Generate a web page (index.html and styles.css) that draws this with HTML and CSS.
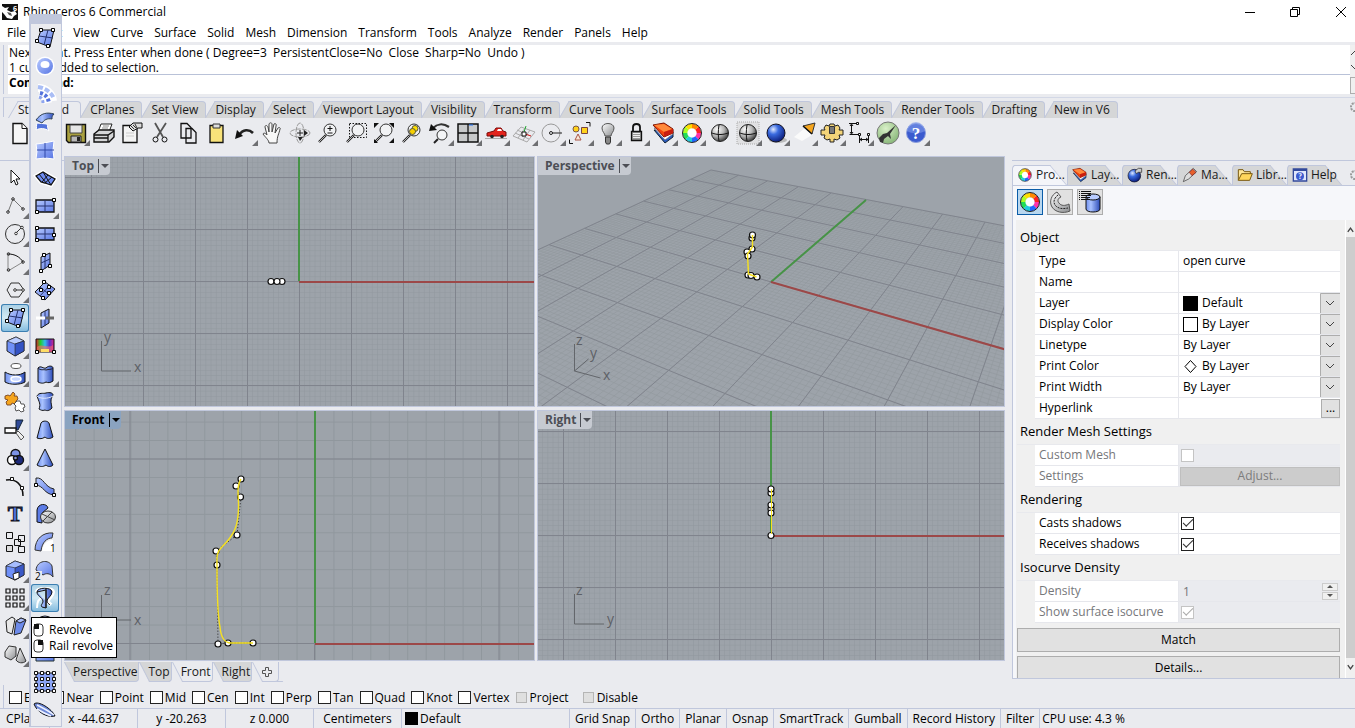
FILE: index.html
```html
<!DOCTYPE html>
<html lang="en">
<head>
<meta charset="utf-8">
<title>Rhinoceros 6 Commercial</title>
<link rel="stylesheet" href="styles.css">
</head>
<body>
<svg class="defs" aria-hidden="true">
  <defs>
    <linearGradient id="blue" x1="0" y1="0" x2="1" y2="1"><stop offset="0" stop-color="#b9cbff"/><stop offset="1" stop-color="#5876e4"/></linearGradient>
    <linearGradient id="tube" x1="0" y1="0" x2="1" y2="0"><stop offset="0" stop-color="#6f8fee"/><stop offset=".35" stop-color="#a9c2ff"/><stop offset="1" stop-color="#2b4bb8"/></linearGradient>
    <linearGradient id="grey" x1="0" y1="0" x2="1" y2="1"><stop offset="0" stop-color="#fff"/><stop offset="1" stop-color="#8b8d90"/></linearGradient>
    <radialGradient id="ballgrey" cx=".35" cy=".3" r=".8"><stop offset="0" stop-color="#fff"/><stop offset=".5" stop-color="#b4b4b4"/><stop offset="1" stop-color="#222"/></radialGradient>
    <radialGradient id="ballblue" cx=".35" cy=".3" r=".8"><stop offset="0" stop-color="#dfe9ff"/><stop offset=".35" stop-color="#3a6be0"/><stop offset="1" stop-color="#04106a"/></radialGradient>
    <radialGradient id="ballgreen" cx=".4" cy=".3" r=".8"><stop offset="0" stop-color="#d9f0c8"/><stop offset="1" stop-color="#7fb070"/></radialGradient>
    <linearGradient id="spectrum" x1="0" y1="0" x2="1" y2="0"><stop offset="0" stop-color="#d22"/><stop offset=".25" stop-color="#2c3"/><stop offset=".5" stop-color="#3be"/><stop offset=".75" stop-color="#53c"/><stop offset="1" stop-color="#d28"/></linearGradient>
    <pattern id="topMinor" width="5.2" height="5.2" patternUnits="userSpaceOnUse" x="234" y="124.5"><path d="M0 0H5.2M0 0V5.2" class="minor"/></pattern>
    <pattern id="topMajor" width="52" height="52" patternUnits="userSpaceOnUse" x="234" y="124"><path d="M0 .5H52M.5 0V52" class="major"/></pattern>
    <pattern id="frontMinor" width="18.45" height="18.45" patternUnits="userSpaceOnUse" x="250" y="232"><path d="M0 .5H19M.5 0V19" class="minor"/></pattern>
    <pattern id="frontMajor" width="184.5" height="184.5" patternUnits="userSpaceOnUse" x="249" y="232"><path d="M0 .5H185M.5 0V185" class="major"/></pattern>
    <pattern id="rightMinor" width="5.2" height="5.2" patternUnits="userSpaceOnUse" x="233" y="124.5"><path d="M0 0H5.2M0 0V5.2" class="minor"/></pattern>
    <pattern id="rightMajor" width="52" height="52" patternUnits="userSpaceOnUse" x="233" y="124"><path d="M0 .5H52M.5 0V52" class="major"/></pattern>
    <symbol id="wheel" viewBox="0 0 24 24"><circle cx="12" cy="12" r="4.500" fill="#fff"/><g fill="none" stroke-width="4.500"><circle cx="12" cy="12" r="7" pathLength="8" stroke="#f22" stroke-dasharray="1 7" stroke-dashoffset="1"/><circle cx="12" cy="12" r="7" pathLength="8" stroke="#f3a" stroke-dasharray="1 7"/><circle cx="12" cy="12" r="7" pathLength="8" stroke="#26f" stroke-dasharray="1 7" stroke-dashoffset="-1"/><circle cx="12" cy="12" r="7" pathLength="8" stroke="#2cd" stroke-dasharray="1 7" stroke-dashoffset="-2"/><circle cx="12" cy="12" r="7" pathLength="8" stroke="#2d5" stroke-dasharray="1 7" stroke-dashoffset="-3"/><circle cx="12" cy="12" r="7" pathLength="8" stroke="#af2" stroke-dasharray="1 7" stroke-dashoffset="-4"/><circle cx="12" cy="12" r="7" pathLength="8" stroke="#fd0" stroke-dasharray="1 7" stroke-dashoffset="-5"/><circle cx="12" cy="12" r="7" pathLength="8" stroke="#f80" stroke-dasharray="1 7" stroke-dashoffset="-6"/></g><circle cx="12" cy="12" r="9.500" fill="none" stroke="#222"/></symbol>
    <symbol id="layers" viewBox="0 0 24 24"><path d="M2 9l11 13 8-6V11z" fill="#2a5cc0" stroke="#123"/><path d="M2 7l11 12 8-6V9z" fill="#fff" stroke="#667" stroke-width=".7"/><path d="M1 4l11-2 9 6v4l-9 4z" fill="#f4430c" stroke="#7a1200"/><path d="M2 4l10-1 8 5-8 3z" fill="#ff8a3c"/><path d="M12 11l9-3v4l-9 4z" fill="#c81e10"/></symbol>
    <symbol id="lens" viewBox="0 0 24 24"><path d="M10 14L3 21" stroke="#222" stroke-width="2.400"/><path d="M9.500 14.500L3 21" stroke="#ddd" stroke-width=".8"/><circle cx="14" cy="9" r="6" fill="#f4f5f7" fill-opacity=".7" stroke="#333"/></symbol>
    <symbol id="patch" viewBox="0 0 24 24"><path d="M8 4h13l-4 17L4 16z" fill="url(#blue)" stroke="#111"/><path d="M15 4l-4 15M6 10l14 2" stroke="#26336f"/><g fill="#fff" stroke="#000"><path d="M6.500 2.500h3v3h-3zM18.500 2.500h3v3h-3zM2.500 13.500h3v3h-3zM13.500 18.500h3v3h-3z"/></g></symbol>
  </defs>
</svg>

<header class="titlebar">
  <svg class="appicon" viewBox="0 0 16 16"><path d="M0 0h16v16H0z" fill="#111"/><path d="M0 2l3 2 4-1-2 3 4 2 4-1 2 3-3 2-2 3-5-1-3-4-2-2z" fill="#fff"/><path d="M5 8l4 1 1 3-3-1z" fill="#555"/><text x="11" y="7" class="appnum">6</text></svg>
  <h1>Rhinoceros 6 Commercial</h1>
  <div class="winbtns">
    <button aria-label="Minimize"><svg viewBox="0 0 12 12"><path d="M1 6.500h10"/></svg></button>
    <button aria-label="Restore"><svg viewBox="0 0 12 12"><path d="M1.500 3.500h7v7h-7zM3.500 3V1.500h7v7H9"/></svg></button>
    <button aria-label="Close"><svg viewBox="0 0 12 12"><path d="M1 1l10 10M11 1L1 11"/></svg></button>
  </div>
</header>

<nav class="menubar">
  <button>File</button><button>Edit</button><button>View</button><button>Curve</button><button>Surface</button><button>Solid</button><button>Mesh</button><button>Dimension</button><button>Transform</button><button>Tools</button><button>Analyze</button><button>Render</button><button>Panels</button><button>Help</button>
</nav>

<section class="command">
  <div class="lines">
    <div class="history"><p>Next point. Press Enter when done ( Degree=3&nbsp; PersistentClose=No&nbsp; Close&nbsp; Sharp=No&nbsp; Undo )</p><p>1 curve added to selection.</p></div>
    <div class="prompt"><label for="cmd">Command:</label><input id="cmd" type="text"></div>
  </div>
  <div class="cmdscroll"><svg viewBox="0 0 6 8"><path d="M1 6l4-4"/></svg><svg viewBox="0 0 6 8"><path d="M1 2l4 4"/></svg><i></i></div>
</section>

<div class="tooltabs" role="tablist">
  <button class="current">Standard</button><button>CPlanes</button><button>Set View</button><button>Display</button><button>Select</button><button>Viewport Layout</button><button>Visibility</button><button>Transform</button><button>Curve Tools</button><button>Surface Tools</button><button>Solid Tools</button><button>Mesh Tools</button><button>Render Tools</button><button>Drafting</button><button>New in V6</button>
  <svg class="cog" viewBox="0 0 6 12"><circle cx="6" cy="6" r="4" stroke-dasharray="2 1"/></svg>
</div>

<div class="toolbar">
  <button aria-label="New"><svg viewBox="0 0 24 24"><path d="M5 2.500h9l5 5v15H5z" fill="#f6f6f6" stroke="#111" stroke-width="1.400"/><path d="M14 2.500v5h5" fill="#fff" stroke="#111"/></svg></button>
  <button aria-label="Open"><svg viewBox="0 0 24 24"><path d="M2 6h7l2 2h9v12H2z" fill="#e7c24a" stroke="#111"/></svg></button>
  <button class="more" aria-label="Save"><svg viewBox="0 0 24 24"><path d="M2.500 3.500h19v18h-17l-2-2z" fill="#a9a03f" stroke="#111" stroke-width="1.400"/><path d="M6 4h12v8H6z" fill="#e6e6e6" stroke="#444"/><path d="M7 15h10v6H7z" fill="#b9b9b9" stroke="#222"/><path d="M13 16h3v4h-3z" fill="#222"/></svg></button>
  <button aria-label="Print"><svg viewBox="0 0 24 24"><path d="M9 3h11l-3 8H6z" fill="#fff" stroke="#222"/><path d="M2 13l5-4h15v7l-5 5H2z" fill="#d4d5d7" stroke="#111" stroke-width="1.400"/><path d="M2 14h14l6-4M2 17h14M16 14v7" fill="none" stroke="#111" stroke-width="1.300"/><path d="M11 5h6M10 7h6" stroke="#888"/></svg></button>
  <button aria-label="Document properties"><svg viewBox="0 0 24 24"><path d="M3 4.500h14v17H3z" fill="#f4f4f4" stroke="#111" stroke-width="1.300"/><path d="M6 12h8M6 15h8" stroke="#ccc"/><path d="M9 6l4-4h9v5h-4l-5 3z" fill="#ddd" stroke="#111"/><path d="M11 5l3 3M13 4l3 3M15 3l2 4" stroke="#333"/></svg></button>
  <button aria-label="Cut"><svg viewBox="0 0 24 24" fill="none"><path d="M7 2l8 14M18 2L9 16" stroke="#555" stroke-width="1.800"/><circle cx="7.500" cy="18.500" r="2.500" stroke="#111"/><circle cx="16.500" cy="18.500" r="2.500" stroke="#111"/></svg></button>
  <button aria-label="Copy"><svg viewBox="0 0 24 24" fill="#f7f7f7" stroke="#111" stroke-width="1.300"><path d="M5 2.500h6l4 4V17H5z"/><path d="M10 7.500h6l4 4V22H10z"/></svg></button>
  <button aria-label="Paste"><svg viewBox="0 0 24 24"><path d="M6 4.500h13v17H6z" fill="#f9e37a" stroke="#111" stroke-width="1.300"/><path d="M9 3h7v4H9z" fill="#ddd" stroke="#333"/></svg></button>
  <button class="more" aria-label="Undo"><svg viewBox="0 0 24 24"><path d="M7 14c4-6 10-6 14-2" fill="none" stroke="#222" stroke-width="2.600"/><path d="M3 18l2-9 6 6z" fill="#111"/></svg></button>
  <button aria-label="Pan"><svg viewBox="0 0 24 24"><path d="M9 22c0-3-4-6-6-9 1-2 3 0 4 1L5 6c0-2 2-2 3 0l1 5V3c1-2 3-1 3 0v8l2-8c1-1 3 0 2 2l-1 7 3-5c1-1 3 0 2 1-1 5-3 7-3 14z" fill="#f8f8f8" stroke="#444"/></svg></button>
  <button aria-label="Rotate view"><svg viewBox="0 0 24 24" fill="none"><ellipse cx="12" cy="12" rx="10" ry="4" stroke="#999" stroke-dasharray="5 1"/><ellipse cx="12" cy="12" rx="4" ry="10" stroke="#999" stroke-dasharray="5 1"/><path d="M12 9v6M9 12h6" stroke="#222"/><path d="M16 9v6l4-3zM10 16l2 4 3-4z" fill="#222"/></svg></button>
  <button aria-label="Zoom dynamic"><svg viewBox="0 0 24 24"><use href="#lens"/><path d="M11.500 7.500h5M14 5v5M11.500 12h5" stroke="#111"/></svg></button>
  <button aria-label="Zoom window"><svg viewBox="0 0 24 24"><path d="M5.500 2.500h17v14h-17z" fill="none" stroke="#111" stroke-dasharray="1.500 1.500"/><use href="#lens"/></svg></button>
  <button aria-label="Zoom extents"><svg viewBox="0 0 24 24"><use href="#lens"/><path d="M2 2h5L2 7zM22 2v5l-5-5zM22 22h-5l5-5zM2 22v-4l4 4z" fill="#111"/></svg></button>
  <button aria-label="Zoom selected"><svg viewBox="0 0 24 24"><use href="#lens"/><circle cx="15" cy="7.500" r="3" fill="#ffe000" stroke="#554"/><circle cx="12.500" cy="10.500" r="3" fill="#f7d000" stroke="#554"/></svg></button>
  <button class="more" aria-label="Undo view change"><svg viewBox="0 0 24 24"><path d="M5 7c4-4 10-5 16-1" fill="none" stroke="#333" stroke-width="2.200"/><path d="M1 10l2-7 6 6z" fill="#111"/><path d="M10 18l-4 4" stroke="#222" stroke-width="2"/><circle cx="14" cy="14" r="5" fill="#f4f5f7" stroke="#333"/></svg></button>
  <button class="more" aria-label="Four viewports"><svg viewBox="0 0 24 24"><path d="M2 3h20v18H2z" fill="#c7c9ca" stroke="#111" stroke-width="1.500"/><path d="M12 3v18M2 12h20" stroke="#111" stroke-width="1.300"/><path d="M13 4h4" stroke="#27f"/></svg></button>
  <button class="more" aria-label="Named views"><svg viewBox="0 0 24 24"><path d="M1 17.500h22" stroke="#aaa"/><path d="M3 15v-3l7-2 2-3h5l2 3 3 1v4z" fill="#e3231c" stroke="#7d0b08"/><path d="M13 10l1-2h3l1 2z" fill="#fff"/><circle cx="8" cy="15.500" r="1.800" fill="#222"/><circle cx="18" cy="15.500" r="1.800" fill="#222"/></svg></button>
  <button class="more" aria-label="Set construction plane"><svg viewBox="0 0 24 24"><path d="M9 6l14 5-8 10L1 15z M5 9l14 6 M13 7L6 17 M18 9l-7 10M3 12l14 6" fill="none" stroke="#aaa"/><path d="M12 11l2-6" stroke="#2a3"/><path d="M13 13l6 2" stroke="#d22"/><path d="M10 11h4v4h-4z" fill="#fff" stroke="#111"/></svg></button>
  <button class="more" aria-label="Object snap"><svg viewBox="0 0 24 24" fill="none"><circle cx="11" cy="12" r="9" stroke="#999"/><path d="M12 12h10" stroke="#222"/><circle cx="11" cy="12" r="1.500" stroke="#222"/></svg></button>
  <button class="more" aria-label="Select"><svg viewBox="0 0 24 24"><path d="M18 1.500h4v4M5 22.500H1.500v-4" fill="none" stroke="#111"/><circle cx="8" cy="8" r="3" fill="#ffd21a" stroke="#754"/><path d="M13.500 6.500h6v6h-6z" fill="#ffd21a" stroke="#744"/><path d="M7 19l3-6 3 6z" fill="#f8e7d8" stroke="#a54"/></svg></button>
  <button class="more" aria-label="Hide"><svg viewBox="0 0 24 24"><path d="M9 15c0-3-3-4-3-8 0-6 12-6 12 0 0 4-3 5-3 8z" fill="url(#grey)" stroke="#555"/><path d="M9.500 16h5v5l-1 2h-3l-1-2z" fill="#888" stroke="#333"/></svg></button>
  <button class="more" aria-label="Lock"><svg viewBox="0 0 24 24"><path d="M9 11V6c0-4 7-4 7 0v5" fill="none" stroke="#111" stroke-width="1.800"/><path d="M7.500 10.500h10v9h-10z" fill="#999" stroke="#111" stroke-width="1.300"/><path d="M9 12.500h7M9 14.500h7M9 16.500h7" stroke="#eee"/></svg></button>
  <button class="more" aria-label="Layers"><svg viewBox="0 0 24 24"><use href="#layers"/></svg></button>
  <button class="more" aria-label="Properties"><svg viewBox="0 0 24 24"><use href="#wheel"/></svg></button>
  <button aria-label="Shade"><svg viewBox="0 0 24 24"><circle cx="12" cy="12" r="8.500" fill="url(#ballgrey)" stroke="#222"/><path d="M4 12c5 2 11 2 16 0M11 4c-1 6-1 11 0 16" fill="none" stroke="#111"/></svg></button>
  <button class="more" aria-label="Shade selected"><svg viewBox="0 0 24 24"><path d="M1 1h22v22H1z" fill="#e0e0e2" stroke="#aaa" stroke-dasharray="1 1"/><circle cx="12" cy="12" r="8.500" fill="url(#ballgrey)" stroke="#222"/><path d="M4 12c5 2 11 2 16 0M11 4c-1 6-1 11 0 16" fill="none" stroke="#111"/></svg></button>
  <button class="more" aria-label="Render"><svg viewBox="0 0 24 24"><ellipse cx="14" cy="19" rx="9" ry="3" fill="#bbb"/><circle cx="12" cy="12" r="9" fill="url(#ballblue)" stroke="#112"/></svg></button>
  <button class="more" aria-label="Lights"><svg viewBox="0 0 24 24"><path d="M13 7L2 16l8 4 10-6z" fill="#fafafa"/><path d="M11 5l12-3-3 11z" fill="#f5a51e" stroke="#333"/><path d="M11 5l9 8" stroke="#111" stroke-width="1.500"/></svg></button>
  <button class="more" aria-label="Options"><svg viewBox="0 0 24 24"><path d="M6 4l3 1 1-2h4l1 2 3-1 2 3-1 2 4 0v5l-4 0 1 3-3 2-3-1 0 3h-4l0-3-3 1-3-2 1-3-4 0V9l4 0-1-2z" fill="#f3d479" stroke="#222"/><path d="M9.500 5.500h5v7h-5z" fill="#777" stroke="#333"/></svg></button>
  <button class="more" aria-label="Dimensions"><svg viewBox="0 0 24 24" fill="none" stroke="#111"><path d="M3.500 4v8M1 2.500h8M1.500 13.500h9M2 5l1.500-2L5 5M2 11l1.500 2L5 11M11.500 15v7M20.500 13v9M12 18.500h8M14 17l-2 1.500 2 1.500M18 17l2 1.500-2 1.500"/><path d="M8.500 1.500h2v2h-2zM10.500 12.500h2v2h-2zM19.500 12.500h2v2h-2z" fill="#fff"/></svg></button>
  <button aria-label="Grasshopper"><svg viewBox="0 0 24 24"><circle cx="12" cy="12" r="11" fill="url(#ballgreen)" stroke="#777"/><path d="M3 17l4-4 4-1 9-8-6 9 1 5-3-3-4 3-1 4-3-1z" fill="#333"/></svg></button>
  <button class="more" aria-label="Help"><svg viewBox="0 0 24 24"><circle cx="12" cy="12" r="9.500" fill="#3b5bcf" stroke="#8d9fdc"/><path d="M3 10a9 9 0 0118 0c-5 3-13 3-18 0" fill="#7f9aea" opacity=".6"/><text x="12" y="18" class="qmark">?</text></svg></button>
</div>

<main>
  <div class="sidebar">
    <button aria-label="Cancel"><svg viewBox="0 0 24 24"><path d="M8 4v13l3-3 2 5 2-1-2-5h4z" fill="#fff" stroke="#111"/></svg></button>
    <button class="more" aria-label="Polyline"><svg viewBox="0 0 24 24" fill="#fff" stroke="#333"><path d="M5 18L10 5l10 10" fill="none" stroke="#777"/><circle cx="5" cy="18" r="1.300"/><circle cx="10" cy="5" r="1.300"/><circle cx="20" cy="15" r="1.300"/></svg></button>
    <button class="more" aria-label="Circle"><svg viewBox="0 0 24 24" fill="none" stroke="#333"><circle cx="12" cy="12" r="9.500"/><path d="M13 11l6-6"/><circle cx="13" cy="11.500" r="1.300" fill="#fff"/><circle cx="19" cy="5.500" r="1.300" fill="#fff"/></svg></button>
    <button class="more" aria-label="Arc"><svg viewBox="0 0 24 24" fill="#fff" stroke="#333"><path d="M5 4v17l15-9" fill="none" stroke="#888"/><path d="M5 4c7 0 12 3 15 8" fill="none" stroke="#111"/><circle cx="5.500" cy="4" r="1.300"/><circle cx="5.500" cy="20" r="1.300"/><circle cx="20" cy="12" r="1.300"/></svg></button>
    <button class="more" aria-label="Polygon"><svg viewBox="0 0 24 24" fill="none" stroke="#333"><path d="M4 12l4-7h8l5 7-5 7H8z"/><path d="M12 12h8"/><circle cx="12" cy="12" r="1.300" fill="#fff"/><circle cx="20" cy="12" r="1.300" fill="#fff"/></svg></button>
    <button class="picked" aria-label="Surface from points"><svg viewBox="0 0 24 24"><use href="#patch"/></svg></button>
    <button class="more" aria-label="Box"><svg viewBox="0 0 24 24" stroke="#222"><path d="M4 7l9-4 8 4v10l-9 5-8-5z" fill="#6f90f8"/><path d="M4 7l9-4 8 4-9 3z" fill="#b9ccff" stroke-width=".6"/><path d="M12 10l9-3v10l-9 5z" fill="#3453c4" stroke-width=".6"/></svg></button>
    <button class="more" aria-label="Project curve"><svg viewBox="0 0 24 24"><ellipse cx="13" cy="4" rx="5" ry="2.500" fill="#fff" stroke="#555"/><path d="M2 10c6 4 15 4 20 0v10c-5 3-15 3-20 0z" fill="url(#tube)" stroke="#111"/><ellipse cx="13" cy="17" rx="5" ry="2.500" fill="#c9d8ff" stroke="#fff" stroke-width="1.500"/></svg></button>
    <button aria-label="Boolean tools"><svg viewBox="0 0 24 24" stroke-width=".9"><path d="M10 2l2 2-1 2 3 0 1 3-2 2-1 3-3-1-1 2-4 0-1-3 2-2-3-1 0-3 3-1 2 1z" fill="#f5a51e" stroke="#742"/><path d="M14 11l3 0 1 3 3 0 1 3-2 1 1 3-3 1-2-2-3 1-1-3 1-2-2-2z" fill="#fff" stroke="#444"/></svg></button>
    <button aria-label="Trim"><svg viewBox="0 0 24 24"><path d="M13 2h7l-5 10h-2z" fill="#2f4a98" stroke="#123"/><path d="M2 10h11v5H2z" fill="#fff" stroke="#111" stroke-width="1.300"/><path d="M15 13l6 6-3 3-5-7z" fill="#eee" stroke="#555"/></svg></button>
    <button class="more" aria-label="Group"><svg viewBox="0 0 24 24" stroke="#111" stroke-width="1.400"><circle cx="12.500" cy="8" r="4.500" fill="#7d93e6"/><circle cx="9" cy="14" r="4.500" fill="#fff"/><circle cx="16" cy="14" r="4.500" fill="#1d2a7a"/><circle cx="12.500" cy="12" r="2" fill="#8895d8"/></svg></button>
    <button aria-label="Edit points"><svg viewBox="0 0 24 24"><path d="M3 6c10-2 17 5 17 16" fill="none" stroke="#111" stroke-width="1.500"/><path d="M7.500 3.500h3v3h-3zM17.500 12.500h3v3h-3z" fill="#fff" stroke="#111"/></svg></button>
    <button aria-label="Text"><svg viewBox="0 0 24 24"><text x="12" y="19" class="bigt">T</text></svg></button>
    <button aria-label="Blocks"><svg viewBox="0 0 24 24" fill="#7d9df2" stroke="#111"><path d="M3.500 2.500h6v6h-6zM15.500 5.500h6v6h-6zM11.500 9.500h6v6h-6zM15.500 16.500h6v6h-6z"/><path d="M3.500 15.500h6v6h-6z" fill="#ddd"/></svg></button>
    <button class="more" aria-label="Solid editing"><svg viewBox="0 0 24 24" stroke="#222"><path d="M3 8l9-5 9 3v11l-9 5-9-4z" fill="#6f90f8"/><path d="M3 8l9-5 9 3-8 4z" fill="#a6bdff" stroke-width=".6"/><path d="M12 10l9-4v11l-9 5z" fill="#3a58c6" stroke-width=".6"/><path d="M10 16l6-2v6l-5 2z" fill="#fff"/></svg></button>
    <button class="more" aria-label="Array"><svg viewBox="0 0 24 24" fill="#8fa9ee" stroke="#111" stroke-width="1.200"><path d="M3 3h4v4H3zM10 3h4v4h-4zM17 3h4v4h-4zM3 10h4v4H3zM10 10h4v4h-4zM17 10h4v4h-4zM3 17h4v4H3zM10 17h4v4h-4zM17 17h4v4h-4z"/></svg></button>
    <button class="more" aria-label="Transform"><svg viewBox="0 0 24 24" stroke="#222"><path d="M3 7l6-4 3 2-3 15-5-2z" fill="#e8e8e8"/><path d="M13 7l5-3 5 2-5 13-7 2z" fill="#6d8bea"/><path d="M13 7l5-3 5 2-6 3z" fill="#a9bdfb"/></svg></button>
    <button class="more" aria-label="Check"><svg viewBox="0 0 24 24" stroke="#333"><path d="M2 10l4-6 7 1v9l-5 4-6-3z" fill="url(#grey)"/><path d="M17 6l6 13c-3 3-8 2-10-1z" fill="url(#grey)"/></svg></button>
  </div>

  <section class="views">
    <div class="panes">
      <div class="pane">
        <svg><rect width="100%" height="100%" fill="url(#topMinor)"/><rect width="100%" height="100%" fill="url(#topMajor)"/><path class="green" d="M234 0v124"/><path class="red" d="M234 125h600"/><path class="tripod" d="M36.500 184v30H66"/><text x="39" y="185">y</text><text x="69" y="215">x</text><g class="pts"><circle cx="206" cy="124.500" r="3"/><circle cx="217" cy="124.500" r="3"/><circle cx="212" cy="124.500" r="3"/></g></svg>
        <button class="viewname">Top</button>
      </div>
      <div class="pane">
        <svg><path class="minor faint" id="gridMinor"/><path class="major" id="gridMajor"/><path class="green" d="M233 125L328 43"/><path class="red" d="M233 125l340 98"/><path class="tripod" d="M36.500 187v27l14-12M36.500 214l26 7"/><text x="38" y="188">z</text><text x="52" y="201">y</text><text x="65" y="223">x</text><g class="pts"><circle cx="214" cy="81" r="3"/><circle cx="214.500" cy="78" r="3"/><circle cx="214" cy="92" r="3"/><circle cx="209" cy="95" r="3"/><circle cx="210" cy="99" r="3"/><circle cx="210" cy="118" r="3"/><circle cx="213" cy="118.500" r="3"/><circle cx="219" cy="120" r="3"/></g><path class="curve" d="M214.500 78v12l-5 7 1 20 8 3"/></svg>
        <button class="viewname">Perspective</button>
      </div>
      <div class="pane">
        <svg><rect width="100%" height="100%" fill="url(#frontMinor)"/><rect width="100%" height="100%" fill="url(#frontMajor)"/><path class="green" d="M250 0v232"/><path class="red" d="M250 233h600"/><path class="tripod" d="M36.500 184v25H66"/><text x="39" y="184">z</text><text x="69" y="214">x</text><path class="hull" d="M176 68l-5 7 5 11-4 38-21 16 1 14 1 79 10-1h25"/><g class="pts"><circle cx="176" cy="68" r="3"/><circle cx="171" cy="75" r="3"/><circle cx="175.500" cy="86" r="3"/><circle cx="172" cy="124" r="3"/><circle cx="151" cy="140" r="3"/><circle cx="152" cy="154" r="3"/><circle cx="153" cy="233" r="3"/><circle cx="163" cy="232" r="3"/><circle cx="188" cy="232" r="3"/></g><path class="curve" d="M176 68C172 74 173 82 173.500 92C174 116 169 124 156 137C151 142 152 148 152 154C152 180 153 206 155 216C156 227 160 232 166 232H188"/></svg>
        <button class="viewname active">Front</button>
      </div>
      <div class="pane">
        <svg><rect width="100%" height="100%" fill="url(#rightMinor)"/><rect width="100%" height="100%" fill="url(#rightMajor)"/><path class="green" d="M233 0v124"/><path class="red" d="M233 125h600"/><path class="tripod" d="M36.500 183v30H66"/><text x="38" y="184">z</text><text x="69" y="213">y</text><g class="pts"><circle cx="233" cy="82" r="3"/><circle cx="233" cy="78" r="3"/><circle cx="233" cy="98" r="3"/><circle cx="233" cy="102" r="3"/><circle cx="233" cy="94" r="3"/><circle cx="233" cy="124.500" r="3"/></g><path class="curve thin" d="M233.500 78v45"/></svg>
        <button class="viewname">Right</button>
      </div>
    </div>
    <div class="viewtabs"><button>Perspective</button><button>Top</button><button class="current">Front</button><button>Right</button><button class="current add" aria-label="New viewport tab"><svg viewBox="0 0 12 12"><path d="M4.500 1.500h3v3h3v3h-3v3h-3v-3h-3v-3h3z" fill="none" stroke="#555"/></svg></button></div>
  </section>

  <aside class="panel">
    <div class="paneltabs">
      <button class="current"><svg viewBox="0 0 24 24"><use href="#wheel"/></svg>Pro...</button>
      <button><svg viewBox="0 0 24 24"><use href="#layers"/></svg>Lay...</button>
      <button><svg viewBox="0 0 24 24"><circle cx="11" cy="13" r="9.500" fill="url(#ballblue)" stroke="#112"/><path d="M12 6l5-4h5v6h-5l-3 2z" fill="#ccc" stroke="#222"/></svg>Ren...</button>
      <button><svg viewBox="0 0 24 24"><path d="M2 22l3-9 12-11 5 5L10 18z" fill="#ddd" stroke="#333"/><path d="M11 8l5-5 5 5-6 5z" fill="#e8602c" stroke="#722"/></svg>Ma...</button>
      <button><svg viewBox="0 0 24 24"><path d="M2 20V4h7l2 3h9v4" fill="#ffe79a" stroke="#7a5a10" stroke-width="1.500"/><path d="M2 20l5-10h16l-4 10z" fill="#ffd65c" stroke="#7a5a10" stroke-width="1.500"/></svg>Libr...</button>
      <button><svg viewBox="0 0 24 24"><path d="M2 3h20v18H2z" fill="#dfe6fb" stroke="#334a9c" stroke-width="2"/><path d="M2 3h20v3H2z" fill="#334a9c"/><circle cx="12" cy="14" r="6" fill="#3b5bcf"/><text x="12" y="18" class="smallq">?</text></svg>Help</button>
      <svg class="cog" viewBox="0 0 6 12"><circle cx="6" cy="6" r="4" stroke-dasharray="2 1"/></svg>
    </div>
    <div class="panelbody">
      <div class="pages">
        <button class="on" aria-label="Object"><svg viewBox="0 0 24 24"><use href="#wheel"/></svg></button>
        <button aria-label="Texture mapping"><svg viewBox="0 0 24 24"><path d="M9 2C3 5 1 12 4 17c3 5 11 7 18 4l-1-7c-4 2-8 2-10-1-2-2-1-5 2-6z" fill="url(#grey)" stroke="#555"/><path d="M10 5c-4 3-5 7-3 10 3 4 8 4 13 3" fill="none" stroke="#222" stroke-dasharray="2 1"/></svg></button>
        <button aria-label="Attribute text"><svg viewBox="0 0 24 24"><path d="M8 7v12c0 4 14 4 14 0V7z" fill="url(#tube)" stroke="#111"/><ellipse cx="15" cy="7" rx="7" ry="3" fill="#b9ccff" stroke="#111"/><path d="M1 1.500h1M3 1.500h10M1 3.500h1M3 3.500h10M1 5.500h1M3 5.500h10M1 7.500h1M3 7.500h9M1 9.500h1M3 9.500h9" stroke="#111"/></svg></button>
      </div>
      <form class="scroller">
        <div class="props">
          <h2>Object</h2>
          <div class="row"><span class="name">Type</span><span class="value">open curve</span></div>
          <div class="row"><label class="name" for="pname">Name</label><span class="value"><input id="pname" type="text"></span></div>
          <div class="row"><label class="name" for="player">Layer</label><span class="value"><i class="swatch black"></i><select id="player"><option>Default</option></select></span></div>
          <div class="row"><label class="name" for="pdc">Display Color</label><span class="value"><i class="swatch"></i><select id="pdc"><option>By Layer</option></select></span></div>
          <div class="row"><label class="name" for="plt">Linetype</label><span class="value"><select id="plt"><option>By Layer</option></select></span></div>
          <div class="row"><label class="name" for="ppc">Print Color</label><span class="value"><svg class="diamond" viewBox="0 0 15 15"><path d="M7.500 1.500l5.500 6-5.500 6-5.500-6z"/></svg><select id="ppc"><option>By Layer</option></select></span></div>
          <div class="row"><label class="name" for="ppw">Print Width</label><span class="value"><select id="ppw"><option>By Layer</option></select></span></div>
          <div class="row"><label class="name" for="phl">Hyperlink</label><span class="value"><input id="phl" type="text"><button type="button" class="dots">...</button></span></div>
          <h2>Render Mesh Settings</h2>
          <div class="row off"><label class="name" for="pcm">Custom Mesh</label><span class="value tick"><input id="pcm" type="checkbox" disabled></span></div>
          <div class="row off"><span class="name">Settings</span><span class="value"><button type="button" class="adjust" disabled>Adjust...</button></span></div>
          <h2>Rendering</h2>
          <div class="row"><label class="name" for="pcs">Casts shadows</label><span class="value tick"><input id="pcs" type="checkbox" checked></span></div>
          <div class="row"><label class="name" for="prs">Receives shadows</label><span class="value tick"><input id="prs" type="checkbox" checked></span></div>
          <h2>Isocurve Density</h2>
          <div class="row off"><label class="name" for="pd">Density</label><span class="value"><input id="pd" type="text" value="1" disabled><span class="spin"><i class="up"></i><i class="down"></i></span></span></div>
          <div class="row off"><label class="name" for="psi">Show surface isocurve</label><span class="value tick"><input id="psi" type="checkbox" checked disabled></span></div>
          <button type="button" class="wide">Match</button>
          <button type="button" class="wide">Details...</button>
        </div>
        <div class="scrollbar"><svg viewBox="0 0 10 10"><path d="M2 7l3-4 3 4"/></svg><i></i><svg viewBox="0 0 10 10"><path d="M2 3l3 4 3-4"/></svg></div>
      </form>
    </div>
  </aside>
</main>

<div class="osnap">
  <label><input type="checkbox">End</label><label><input type="checkbox">Near</label><label><input type="checkbox">Point</label><label><input type="checkbox">Mid</label><label><input type="checkbox">Cen</label><label><input type="checkbox">Int</label><label><input type="checkbox">Perp</label><label><input type="checkbox">Tan</label><label><input type="checkbox">Quad</label><label><input type="checkbox">Knot</label><label><input type="checkbox">Vertex</label><label class="dim"><input type="checkbox" disabled>Project</label><label class="dim last"><input type="checkbox" disabled>Disable</label>
</div>

<footer class="status">
  <button class="cplane">CPlane</button><span class="coord">x -44.637</span><span class="coord">y -20.263</span><span class="coord">z 0.000</span><button class="coord">Centimeters</button><button class="layer"><i class="swatch black"></i>Default</button><button>Grid Snap</button><button>Ortho</button><button>Planar</button><button>Osnap</button><button>SmartTrack</button><button>Gumball</button><button>Record History</button><button>Filter</button><span class="cpu">CPU use: 4.3 %</span>
</footer>

<div class="flyout">
  <div class="grip"></div>
  <button aria-label="Surface from corner points"><svg viewBox="0 0 24 24"><use href="#patch"/></svg></button>
  <button aria-label="Surface from edges"><svg viewBox="0 0 24 24"><circle cx="12" cy="12" r="9.500" fill="#fff"/><circle cx="12" cy="12" r="8" fill="url(#blue)"/><ellipse cx="12" cy="10.500" rx="4.500" ry="3.500" fill="#fff"/></svg></button>
  <button aria-label="Curve network"><svg viewBox="0 0 24 24" fill="none"><path d="M5 6c8 0 14 5 15 13M6 12c5 1 8 4 9 9" stroke="#fff" stroke-width="8"/><path d="M5 5c8 1 14 6 16 12" stroke="#a9bdf5" stroke-width="4" stroke-dasharray="5 2"/><path d="M7 11c5 1 8 4 9 10" stroke="#5473dd" stroke-width="4" stroke-dasharray="3 2"/><path d="M6 15c3 1 4 3 4 6" stroke="#8ea5ef" stroke-width="3" stroke-dasharray="3 2"/></svg></button>
  <button aria-label="Loft"><svg viewBox="0 0 24 24"><path d="M3 20c1-3 0-4 1-7l10 1c1 2 0 4 2 7-4-3-9-3-13-1z" fill="#5273dc" stroke="#fff"/><path d="M3 10C8 3 14 2 21 4c-2 2-2 3-2 5-5-1-8 1-10 4z" fill="url(#tube)" stroke="#345"/></svg></button>
  <button aria-label="Patch"><svg viewBox="0 0 24 24"><path d="M3 6l8-1 10-2-1 9 1 9-9-1-9 1 1-8z" fill="url(#blue)" stroke="#fff"/><path d="M12 5v15M4 12h17" stroke="#3148a8"/></svg></button>
  <button aria-label="Drape"><svg viewBox="0 0 24 24"><path d="M3 10l7-4 5 3 7 4-4 6-6-2-4-1z" stroke="#fff" stroke-width="4"/><path d="M3 10l7-4 5 3 7 4-4 6-6-2-4-1z" fill="#6e8cf0" stroke="#111" stroke-width="1.300"/><path d="M10 6l8 13M6 8l8 10M15 9l-6 7M19 11l-7 6" stroke="#111"/></svg></button>
  <button class="more" aria-label="Rectangular plane"><svg viewBox="0 0 24 24"><path d="M3 6h18v12H3z" fill="url(#blue)" stroke="#111" stroke-width="1.300"/><path d="M12 6v12M3 12h18" stroke="#26336f"/><path d="M2.500 16.500h3v3h-3zM19.500 4.500h3v3h-3z" fill="#fff" stroke="#000"/></svg></button>
  <button aria-label="Plane by three points"><svg viewBox="0 0 24 24"><path d="M3 6h18v12H3z" fill="url(#blue)" stroke="#111" stroke-width="1.300"/><path d="M12 6v12M3 12h18" stroke="#26336f"/><path d="M2.500 16.500h3v3h-3zM2.500 4.500h3v3h-3zM19.500 11.500h3v3h-3z" fill="#fff" stroke="#000"/></svg></button>
  <button aria-label="Vertical plane"><svg viewBox="0 0 24 24"><path d="M8 7l9-4v12l-9 6z" fill="url(#blue)" stroke="#111"/><path d="M12 5v14M8 13l9-4" stroke="#26336f"/><path d="M9.500 3.500h3v3h-3zM6.500 19.500h3v3h-3zM15.500 14.500h3v3h-3z" fill="#fff" stroke="#000"/></svg></button>
  <button aria-label="Plane through points"><svg viewBox="0 0 24 24"><path d="M2 14L12 4l10 7-10 11z" fill="url(#blue)" stroke="#111"/><path d="M7 9l10 8M17 7L7 18" stroke="#26336f"/><path d="M9.500 2.500h3v3h-3zM14.500 7.500h3v3h-3zM6.500 10.500h3v3h-3zM14.500 13.500h3v3h-3zM8.500 18.500h3v3h-3z" fill="#fff" stroke="#000"/></svg></button>
  <button aria-label="Cutting plane"><svg viewBox="0 0 24 24"><path d="M8 7l8-4v14l-8 5z" fill="url(#blue)" stroke="#111"/><path d="M12 5v15" stroke="#26336f"/><path d="M3 12h9" stroke="#fff" stroke-width="3"/><path d="M13 12h8" stroke="#666" stroke-width="3"/></svg></button>
  <button aria-label="Picture frame"><svg viewBox="0 0 24 24"><path d="M3 5h18v13H3z" fill="url(#spectrum)" stroke="#111"/><path d="M4 13c5-4 11 2 16-2v7H4z" fill="#f66" opacity=".6"/><path d="M8 15h8v3H8z" fill="#fd6"/><path d="M2.500 16.500h3v3h-3zM19.500 16.500h3v3h-3z" fill="#fff" stroke="#000"/></svg></button>
  <button class="more" aria-label="Extrude straight"><svg viewBox="0 0 24 24"><path d="M5 6c3-3 5 1 8 0 3-3 7-2 7 0v13c-3 2-5 2-7 1-3 2-6 1-8 0z" fill="url(#tube)" stroke="#111"/><path d="M5 6c3 3 5 1 8 2 3-1 5 0 7-2" fill="none" stroke="#223"/></svg></button>
  <button aria-label="Extrude along curve"><svg viewBox="0 0 24 24"><path d="M4 6c2-4 6-2 9-3 4-1 7 0 7 2-3 5-2 7-1 13-3 3-5 3-7 2-3 1-4 0-6-1 2-5 0-7-2-13z" fill="url(#tube)" stroke="#111"/><path d="M4 6c3 3 11 3 16 0" fill="none" stroke="#dfe8ff"/></svg></button>
  <button aria-label="Extrude tapered"><svg viewBox="0 0 24 24"><path d="M8 5c2-3 7-2 8 0l4 14c-3 2-6 2-8 0-3 2-5 2-8 1z" fill="url(#tube)" stroke="#111"/></svg></button>
  <button aria-label="Extrude to point"><svg viewBox="0 0 24 24"><path d="M12 3l8 16c-2 2-5 2-7 0-3 2-6 2-9 0z" fill="url(#tube)" stroke="#111"/></svg></button>
  <button aria-label="Ribbon"><svg viewBox="0 0 24 24"><path d="M3 4c8-1 8 9 18 11v6C11 20 11 12 3 11z" fill="url(#blue)" stroke="#222"/><path d="M1.500 9.500h3v3h-3zM19.500 19.500h3v3h-3z" fill="#fff" stroke="#000"/></svg></button>
  <button aria-label="Fin"><svg viewBox="0 0 24 24"><path d="M4 20V8c1-7 10-7 11-2l-6 5v10z" fill="#5c7ce6" stroke="#111"/><ellipse cx="15" cy="15" rx="7.500" ry="6" fill="url(#grey)" stroke="#333"/><path d="M9 12l13 6M10 19l9-9" fill="none" stroke="#444"/></svg></button>
  <button aria-label="Sweep one rail"><svg viewBox="0 0 24 24"><path d="M2 20C2 9 10 2 20 3l-1 5C14 8 9 12 8 21z" fill="url(#blue)" stroke="#333"/><path d="M9 21c1-7 5-11 11-11v11z" fill="#fff"/><text x="17" y="22" class="digit">1</text></svg></button>
  <button aria-label="Sweep two rails"><svg viewBox="0 0 24 24"><path d="M3 12C4 2 16 1 19 8l1 11c-3-4-7-4-10-2z" fill="url(#blue)" stroke="#333"/><path d="M1 13h8v10H1z" fill="#eaebef"/><text x="2" y="22" class="digit">2</text></svg></button>
  <button class="picked" aria-label="Revolve"><svg viewBox="0 0 24 24"><path d="M10 12c-5 0-6 6-6 10" stroke="#fff" stroke-width="2"/><path d="M4 6c0-4 16-4 16 0 0 4-5 6-5 9 0 2 2 3 3 4" stroke="#fff" stroke-width="4"/><path d="M4 6c0-5 15-5 15 0 0 4-5 6-5 9 0 2 2 3 3 4M4 6c0 4 5 5 6 9 0 3-3 4-1 6l4 1V4z" fill="url(#tube)" stroke="#111"/><path d="M13 3v19" stroke="#222" stroke-width="1.300"/></svg></button>
  <button aria-label="Rail revolve"><svg viewBox="0 0 24 24"><circle cx="12" cy="12" r="10" fill="url(#blue)" stroke="#111"/></svg></button>
  <button aria-label="Heightfield"><svg viewBox="0 0 24 24"><path d="M3 3h18v16H3z" fill="url(#blue)" stroke="#233"/></svg></button>
  <button aria-label="Point grid surface"><svg viewBox="0 0 24 24"><path d="M3 3h18v18H3z" fill="#8ba4f6" stroke="#111"/><g fill="#fff" stroke="#111"><path d="M1.500 1.500h3v3h-3zM7.500 1.500h3v3h-3zM13.500 1.500h3v3h-3zM19.500 1.500h3v3h-3zM1.500 7.500h3v3h-3zM7.500 7.500h3v3h-3zM13.500 7.500h3v3h-3zM19.500 7.500h3v3h-3zM1.500 13.500h3v3h-3zM7.500 13.500h3v3h-3zM13.500 13.500h3v3h-3zM19.500 13.500h3v3h-3zM1.500 19.500h3v3h-3zM7.500 19.500h3v3h-3zM13.500 19.500h3v3h-3zM19.500 19.500h3v3h-3z"/></g></svg></button>
  <button aria-label="Blade"><svg viewBox="0 0 24 24"><path d="M1 6c4-4 18 5 21 12-8 2-18-4-21-12z" fill="#6d88d8" stroke="#111"/><path d="M4 7c6 3 12 6 17 10M4 11c5 3 9 5 14 7" fill="none" stroke="#eef2ff" stroke-width="1.500"/></svg></button>
</div>

<div class="tip" role="tooltip">
  <div><svg viewBox="0 0 12 14"><rect x="1" y="1" width="9" height="12" rx="3" fill="#fff" stroke="#333"/><path d="M1 1h5v5H1z" fill="#111"/></svg>Revolve</div>
  <div><svg viewBox="0 0 12 14"><rect x="1" y="1" width="9" height="12" rx="3" fill="#fff" stroke="#333"/><path d="M5 1h5v5H5z" fill="#111"/></svg>Rail revolve</div>
</div>
<script src="grid.js"></script>
</body>
</html>
```
FILE: styles.css
```css
* { box-sizing: border-box; }
:root { --face: #eaebef; --edge: #c0c7dc; --tab: #d5d6d7; }
body { margin: 0; height: 100vh; overflow: hidden; display: flex; flex-direction: column; background: var(--face); color: #000; font: 12px/16px "Open Sans", "Noto Sans", sans-serif; position: relative; }
button, input, select { font: inherit; color: inherit; margin: 0; padding: 0; border: 0; background: none; border-radius: 0; min-width: 0; }
button { white-space: nowrap; }
p, h1, h2 { margin: 0; font: inherit; }
.defs { position: absolute; width: 0; height: 0; }
svg { display: block; flex: none; }

.titlebar { background: #fff; height: 24px; display: flex; align-items: center; padding-left: 2px; gap: 5px; }
.appicon { width: 16px; height: 16px; }
.appnum { font: bold 7px "Open Sans", sans-serif; fill: #fff; }
.winbtns { margin-left: auto; display: flex; height: 20px; padding-right: 8px; }
.winbtns button { width: 45px; display: flex; justify-content: center; align-items: center; }
.winbtns button:last-child { justify-content: flex-end; width: 30px; }
.winbtns svg { width: 12px; height: 12px; fill: none; stroke: #000; }

.menubar { background: #fff; height: 18px; display: flex; gap: 11px; padding-left: 7px; }
.menubar button:nth-child(2) { margin-left: 4px; }

.command { margin-top: 3px; margin-left: 3px; padding-left: 4px; border-left: 1px solid var(--edge); height: 49px; display: flex; }
.lines { flex: 1; min-width: 0; }
.history { background: #fff; height: 30px; border-bottom: 1px solid #b9c2d8; line-height: 15px; white-space: nowrap; overflow: hidden; }
.history p { padding-left: 1px; }
.prompt { background: #fff; height: 19px; display: flex; font-weight: bold; padding-left: 1px; }
.prompt input { flex: 1; }
.cmdscroll { width: 5px; background: #f0f0f0; display: flex; flex-direction: column; justify-content: space-between; overflow: hidden; padding-top: 4px; }
.cmdscroll svg { width: 6px; height: 8px; fill: none; stroke: #444; }
.cmdscroll i { height: 17px; border: 1px solid #adadad; border-right: 0; }

.tooltabs { margin: 3px 0 0 3px; padding: 3px 0 0 4px; border-top: 1px solid #d3d8e6; border-left: 1px solid var(--edge); display: flex; height: 20px; isolation: isolate; }
.tooltabs button { position: relative; height: 17px; padding: 0 8px 0 10px; line-height: 17px; color: #1a1a1a; margin-right: -1px; }
.tooltabs .current { padding-right: 12px; }
.tooltabs button::before, .tooltabs button::after { content: ""; position: absolute; z-index: -1; top: 0; bottom: 0; background: var(--tab); border-top: 1px solid var(--edge); }
.tooltabs button::before { left: 0; width: 20px; border-left: 1px solid var(--edge); transform: skewX(-30deg); transform-origin: bottom left; }
.tooltabs button::after { left: 15px; right: 0; border-right: 1px solid var(--edge); border-top-right-radius: 4px; }
.tooltabs .current::before, .tooltabs .current::after { background: var(--face); }
.cog { width: 6px; height: 12px; margin-left: auto; fill: none; stroke: #999; stroke-width: 2px; }

.toolbar { display: flex; height: 39px; padding: 2px 0 0 6px; }
.toolbar button, .sidebar button, .flyout button { position: relative; width: 28px; height: 28px; flex: none; display: flex; align-items: center; justify-content: center; }
.toolbar svg, .sidebar svg, .flyout svg { width: 24px; height: 24px; fill: none; }
.more::after { content: ""; position: absolute; right: 0; bottom: 1px; border: 3px solid; border-color: transparent #6e6f72 #6e6f72 transparent; }
.qmark { font: bold 17px "Liberation Serif", serif; fill: #fff; text-anchor: middle; }
.smallq { font: bold 11px "Liberation Serif", serif; fill: #fff; text-anchor: middle; }
.bigt { font: bold 22px "Liberation Serif", serif; fill: #4f74e0; stroke: #112; text-anchor: middle; }
.digit { font: 10px "Open Sans", sans-serif; fill: #000; }

main { flex: 1; min-height: 0; display: flex; }
.sidebar { width: 64px; flex: none; margin-top: 4px; padding: 3px 0 0 1px; border-top: 1px solid var(--edge); }
.picked { background: linear-gradient(#a9cfe4, #d3eaf5 50%, #7fb9dd); box-shadow: inset 0 0 0 1px #3c7fb1; border-radius: 3px; }

.views { flex: 1; min-width: 0; display: flex; flex-direction: column; }
.panes { flex: 1; min-height: 0; display: grid; grid-template: 1fr 1fr / 471fr 468fr; gap: 3px 2px; }
.pane { position: relative; border: 1px solid var(--edge); background: #9da3aa; overflow: hidden; min-width: 0; min-height: 0; }
.pane > svg { width: 100%; height: 100%; fill: none; }
.pane text { font: 14px "Open Sans", sans-serif; fill: #5d6066; }
.minor { stroke: #90979d; fill: none; }
.faint { stroke-width: .6; stroke: #92989e; }
.major { stroke: #80848d; fill: none; }
.green { stroke: #479347; stroke-width: 2; }
.red { stroke: #9c4848; stroke-width: 2; }
.tripod { stroke: #63666b; fill: none; }
.pts circle { fill: #fff; stroke: #111; stroke-width: 1.2px; }
.curve { stroke: #f6e11f; fill: none; stroke-width: 1.4px; }
.thin { stroke-width: 1px; }
.hull { stroke: #222; stroke-dasharray: 1 2; fill: none; }
.viewname { position: absolute; left: 0; top: 0; height: 18px; padding: 0 0 0 7px; display: flex; background: #c6cad1; color: #4c4e55; font-weight: bold; line-height: 18px; border-bottom-right-radius: 4px; }
.viewname::after { content: ""; margin: 2px 3px 2px 4px; width: 8px; border-left: 1px solid; }
.viewname::before { content: ""; position: absolute; right: 1px; top: 7px; border: 4px solid transparent; border-top-color: currentColor; border-bottom: 0; }
.viewname.active { background: #8aa3c0; color: #000; }

.viewtabs { height: 24px; padding-top: 1px; display: flex; align-items: flex-start; isolation: isolate; }
.viewtabs button { position: relative; height: 20px; padding: 0 2px 0 9px; line-height: 20px; color: #1a1a1a; }
.viewtabs button::before, .viewtabs button::after { content: ""; position: absolute; z-index: -1; top: 0; bottom: 0; background: var(--tab); border-bottom: 1px solid var(--edge); }
.viewtabs button::before { left: 0; width: 20px; transform: skewX(27deg); transform-origin: top left; border-left: 1px solid var(--edge); }
.viewtabs button::after { left: 15px; right: 0; border-right: 1px solid var(--edge); border-bottom-right-radius: 4px; }
.viewtabs .current::before, .viewtabs .current::after { background: var(--face); }
.viewtabs svg { width: 12px; height: 12px; }
.viewtabs .add { display: flex; align-items: center; padding-right: 6px; }

.panel { width: 343px; flex: none; margin: 4px 0 6px 7px; border-top: 1px solid var(--edge); padding-top: 4px; display: flex; flex-direction: column; overflow: hidden; }
.paneltabs { display: flex; align-items: center; height: 20px; isolation: isolate; }
.paneltabs button { position: relative; width: 55px; height: 20px; flex: none; display: flex; align-items: center; gap: 3px; padding-left: 5px; color: #1a1a1a; }
.paneltabs button svg { width: 16px; height: 16px; fill: none; }
.paneltabs button::before, .paneltabs button::after { content: ""; position: absolute; z-index: -1; top: 0; bottom: 0; background: var(--tab); border-top: 1px solid var(--edge); }
.paneltabs button::before { left: 0; width: 36px; border-left: 1px solid var(--edge); border-top-left-radius: 4px; }
.paneltabs button::after { right: 0; width: 36px; border-right: 1px solid var(--edge); transform: skewX(40deg); transform-origin: bottom right; }
.paneltabs .current::before, .paneltabs .current::after { background: #f4f5f9; }
.panelbody { flex: 1; min-height: 0; background: #f6f7fa; border: 1px solid var(--edge); border-right: 0; display: flex; flex-direction: column; }
.pages { display: flex; gap: 4px; padding: 3px 0 5px 4px; }
.pages button { width: 26px; height: 26px; border: 1px solid #adadad; background: #e1e1e1; display: flex; align-items: center; justify-content: center; }
.pages .on { border: 1px solid #0a5ca8; background: #b9d7ef; }
.pages svg { width: 24px; height: 24px; fill: none; }
.scroller { flex: 1; min-height: 0; display: flex; background: #f0f0f0; margin-left: 3px; }
.props { flex: 1; min-width: 0; overflow: hidden; padding: 5px 5px 0 1px; }
h2 { height: 26px; line-height: 25px; font-size: 13px; padding-left: 3px; border-bottom: 1px solid #e8e9ed; }
.row { display: grid; grid-template-columns: 143px 1fr; column-gap: 1px; height: 21px; margin-left: 18px; background: #e6e7ec; border-bottom: 1px solid #e6e7ec; }
.name { background: #fff; padding-left: 4px; line-height: 20px; }
.value { background: #fff; display: flex; align-items: center; padding-left: 4px; min-width: 0; }
.value.tick { padding-left: 2px; }
.off { color: #76777a; }
.off .value { background: var(--face); }
.value input[type=text] { flex: 1; height: 20px; }
.value select { flex: 1; height: 20px; appearance: none; background: url("data:image/svg+xml,%3Csvg xmlns='http://www.w3.org/2000/svg' width='20' height='20'%3E%3Cpath d='M1 0h19v20H1z' fill='%23e1e1e1'/%3E%3Cpath d='M.5 20V.5H20' fill='none' stroke='%23adadad'/%3E%3Cpath d='M6 8l4 4 4-4' fill='none' stroke='%23444'/%3E%3C/svg%3E") no-repeat right; }
.swatch { display: block; width: 15px; height: 15px; border: 1px solid #000; background: #fff; margin-right: 4px; flex: none; }
.swatch.black { background: #000; }
.diamond { width: 15px; height: 15px; margin-right: 4px; fill: none; stroke: #000; }
.dots { width: 19px; height: 19px; border: 1px solid #adadad; background: #e1e1e1; line-height: 12px; }
.adjust { flex: 1; height: 19px; margin-left: -3px; background: #cccccc; border: 1px solid #bfbfbf; color: #7c7c7c; line-height: 16px; }
.spin { width: 16px; display: grid; gap: 1px; margin-right: 2px; }
.spin i { height: 8px; border: 1px solid #ccc; background: #f0f0f0; display: grid; place-items: center; }
.spin i::before { content: ""; border: 3px solid transparent; border-top: 0; border-bottom-color: #555; }
.spin .down::before { border: 3px solid transparent; border-bottom: 0; border-top-color: #555; }
input[type=checkbox] { appearance: none; width: 13px; height: 13px; border: 1px solid #222; background: #fff; display: grid; place-items: center; flex: none; }
input[type=checkbox]:checked::before { content: ""; width: 9px; height: 4px; border: solid #333; border-width: 0 0 1px 1px; transform: rotate(-45deg); margin-bottom: 3px; }
input[type=checkbox]:disabled { border-color: #c4c4c4; }
input[type=checkbox]:disabled::before { border-color: #aaa; }
.wide { display: block; width: 100%; height: 24px; margin-top: 5px; border: 1px solid #adadad; background: #e1e1e1; }
.wide + .wide { margin-top: 4px; }
.scrollbar { width: 10px; background: #f0f0f0; display: flex; flex-direction: column; border-left: 1px solid #fff; padding-top: 4px; }
.scrollbar i { flex: 1; background: #cdcdcd; }
.scrollbar svg { width: 9px; height: 12px; fill: none; stroke: #444; stroke-width: 1.5px; margin-bottom: 1px; }
.scrollbar svg:last-child { margin: 3px 0 5px; }

.osnap { height: 23px; padding-top: 2px; display: flex; align-items: center; gap: 6px; margin-left: 3px; padding-left: 5px; border-left: 1px solid var(--edge); }
.osnap label { display: flex; align-items: center; gap: 2px; }
.osnap .dim input { width: 11px; height: 11px; background: #dfdfdf; border-color: #b5b5b5; margin-right: 1px; }
.osnap .last { margin-left: 8px; }

.status { height: 20px; display: flex; border-top: 1px solid var(--edge); line-height: 20px; }
.status > * { border-right: 1px solid var(--edge); padding: 0 5px; white-space: nowrap; }
.status .cplane { width: 50px; padding: 0 0 0 6px; overflow: hidden; text-align: left; }
.status .coord { width: 88px; text-align: center; }
.status .layer { width: 168px; display: flex; align-items: center; padding: 0 3px; }
.status .swatch { width: 13px; height: 13px; margin-right: 2px; }
.status .cpu { border: 0; padding: 0 2px; }

.flyout { position: absolute; left: 29px; top: 14px; width: 33px; padding-bottom: 2px; background: var(--face); border: solid #c0c7dc; border-width: 0 1px 1px 2px; display: flex; flex-direction: column; align-items: flex-start; }
.grip { width: 100%; height: 10px; background: #c0c7dc; }
.tip { position: absolute; left: 31px; top: 617px; background: #fff; border: 1px solid #000; padding: 4px 3px 3px 1px; }
.tip div { display: flex; align-items: center; gap: 4px; }
.tip svg { width: 12px; height: 14px; }
```
FILE: grid.js
```js
// Projects the construction plane into the perspective viewport.
const pairs = [
  [-5, 5, 173, 13],
  [0, 5, 328, 42.5],
  [4, 0, 453, 188],
  [0, -3, 130.7, 213.3],
];

function solve(rows) {
  const n = rows.length;
  for (let c = 0; c < n; c++) {
    let p = c;
    for (let r = c + 1; r < n; r++) if (Math.abs(rows[r][c]) > Math.abs(rows[p][c])) p = r;
    [rows[c], rows[p]] = [rows[p], rows[c]];
    for (let r = 0; r < n; r++) {
      if (r === c) continue;
      const f = rows[r][c] / rows[c][c];
      for (let k = c; k <= n; k++) rows[r][k] -= f * rows[c][k];
    }
  }
  return rows.map((row, i) => row[n] / row[i]);
}

const eqs = [];
for (const [x, y, u, v] of pairs) {
  eqs.push([x, y, 1, 0, 0, 0, -u * x, -u * y, u]);
  eqs.push([0, 0, 0, x, y, 1, -v * x, -v * y, v]);
}
const h = solve(eqs);

function project(x, y) {
  const w = h[6] * x + h[7] * y + 1;
  if (w < 0.1) return null;
  return [(h[0] * x + h[1] * y + h[2]) / w, (h[3] * x + h[4] * y + h[5]) / w];
}

function line(x0, y0, x1, y1) {
  let d = "";
  let pen = false;
  for (let i = 0; i <= 20; i++) {
    const t = i / 20;
    const p = project(x0 + (x1 - x0) * t, y0 + (y1 - y0) * t);
    if (p) d += (pen ? "L" : "M") + p[0].toFixed(1) + " " + p[1].toFixed(1);
    pen = !!p;
  }
  return d;
}

function gridPath(step) {
  const n = Math.round(5 / step);
  let d = "";
  for (let i = -n; i <= n; i++) {
    d += line(i * step, -5, i * step, 5) + line(-5, i * step, 5, i * step);
  }
  return d;
}

document.getElementById("gridMinor").setAttribute("d", gridPath(0.1));
document.getElementById("gridMajor").setAttribute("d", gridPath(1));
```
